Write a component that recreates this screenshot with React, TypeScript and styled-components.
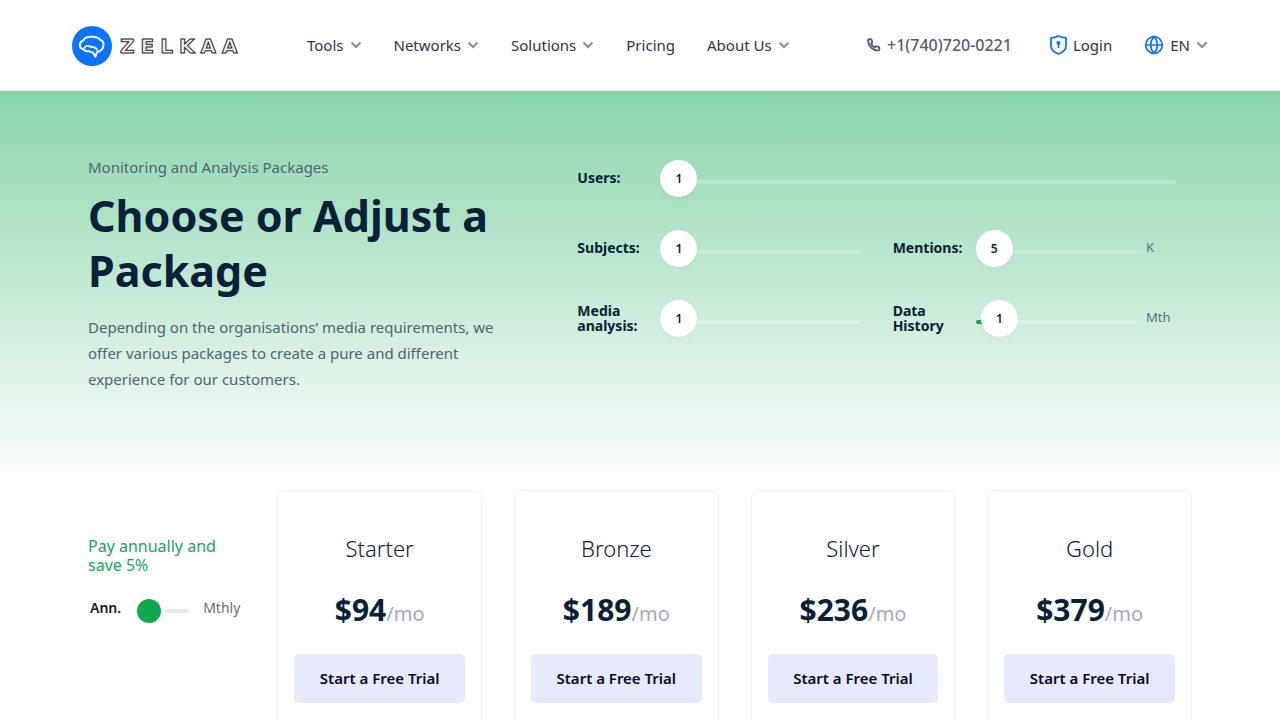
import React, { useState } from "react";
import styled, { createGlobalStyle } from "styled-components";
import { Globe } from "lucide-react";

const GlobalStyle = createGlobalStyle`
  *, *::before, *::after { box-sizing: border-box; }
  body {
    margin: 0;
    background: #fff;
    color: #082138;
    font-family: "Noto Sans", "Open Sans", sans-serif;
    font-size: 15px;
  }
  h1, h2, p { margin: 0; }
`;

const Header = styled.header`
  display: flex;
  align-items: center;
  height: 91px;
  padding: 0 72px;
  border-bottom: 1px solid #e9edf0;
  white-space: nowrap;
`;

const Brand = styled.a`
  display: flex;
  align-items: center;
  gap: 8px;
  width: 235px;
  padding-top: 2px;
  text-decoration: none;
`;

const Wordmark = styled.span`
  font-family: "DejaVu Sans", sans-serif;
  font-size: 20px;
  font-weight: 700;
  line-height: 24px;
  letter-spacing: 6px;
  color: #f0f1f1;
  -webkit-text-stroke: 1px #1f2224;
`;

const Nav = styled.nav`
  display: flex;
  flex: 1;
  gap: 32px;
`;

const NavLink = styled.a`
  display: flex;
  align-items: center;
  gap: 6px;
  color: #2b3352;
  font-size: 15px;
  line-height: 24px;
  text-decoration: none;

  svg { flex: none; }
`;

const Tools = styled.div`
  display: flex;
  gap: 32px;
`;

const PhoneLink = styled(NavLink)`
  color: #555c78;
  font-size: 16px;
  font-weight: 500;
  margin-right: 6px;
`;

const Hero = styled.section`
  height: 397px;
  padding-top: 64px;
  background: linear-gradient(180deg, #8ad5ab 0%, #fff 100%);
`;

const Container = styled.div`
  display: grid;
  grid-template-columns: ${(p: { $cols: string }) => p.$cols};
  max-width: 1136px;
  margin: 0 auto;
`;

const Intro = styled.div`
  padding: 0 32px 0 16px;
  color: #516374;
`;

const Eyebrow = styled.p`
  font-size: 15px;
  line-height: 24px;
`;

const Title = styled.h1`
  margin: 9px 0 16px;
  color: #082138;
  font-size: 43px;
  font-weight: 700;
  line-height: 55px;
`;

const Lead = styled.p`
  font-size: 15px;
  line-height: 26px;
`;

const Controls = styled.div`
  display: grid;
  grid-template-columns: 1fr 1fr;
  grid-auto-rows: 38px;
  gap: 32px;
  padding: 4px 32px 0;
`;

const Control = styled.div`
  display: flex;
  align-items: center;
  grid-column: ${(p: { $wide?: boolean }) => (p.$wide ? "1 / -1" : "auto")};
`;

const ControlLabel = styled.label`
  flex: none;
  width: 83px;
  min-height: 17px;
  padding-right: 12px;
  font-size: 14px;
  font-weight: 700;
  line-height: 15px;
`;

const Unit = styled.span`
  flex: none;
  width: 38px;
  padding: 0 0 2px 8px;
  color: #5d7080;
  font-size: 13px;
  line-height: 20px;
`;

const SliderBox = styled.div`
  position: relative;
  flex: 1;
  height: 37px;
`;

const Range = styled.input`
  appearance: none;
  display: block;
  width: 100%;
  height: 44px;
  margin: 0;
  background: none;

  &::-webkit-slider-runnable-track {
    height: 4px;
    border-radius: 2px;
    background: linear-gradient(#0fa850, #0fa850) no-repeat 0 0 / var(--fill) 100%, rgba(255, 255, 255, 0.25);
  }

  &::-webkit-slider-thumb {
    appearance: none;
    width: 37px;
    height: 37px;
    margin-top: -20px;
    border-radius: 50%;
    background: #fff;
    box-shadow: 0 2px 6px rgba(8, 33, 56, 0.03);
  }
`;

const Bubble = styled.output`
  position: absolute;
  top: 0;
  width: 37px;
  font-size: 12px;
  font-weight: 600;
  line-height: 37px;
  text-align: center;
  pointer-events: none;
`;

const Billing = styled.div`
  padding: 49px 16px 0;
`;

const Saving = styled.p`
  color: #12a955;
  font-size: 16px;
  line-height: 19px;
`;

const Period = styled.div`
  display: flex;
  align-items: center;
  margin-top: 17px;
  padding-left: 2px;
  font-size: 14px;
  line-height: 20px;
`;

const PeriodName = styled.span`
  flex: none;
  padding-bottom: 6px;
  color: ${(p: { $active?: boolean }) => (p.$active ? "#082138" : "#5d7080")};
  font-weight: ${(p: { $active?: boolean }) => (p.$active ? 600 : 400)};
`;

const PeriodRange = styled.input`
  appearance: none;
  width: 56px;
  height: 38px;
  margin: 0 14px 0 12px;
  background: none;

  &::-webkit-slider-runnable-track {
    height: 4px;
    border-radius: 2px;
    background: #e7eafc;
  }

  &::-webkit-slider-thumb {
    appearance: none;
    width: 32px;
    height: 32px;
    margin-top: -14px;
    border: 4px solid #fff;
    border-radius: 50%;
    background: #0fa850;
  }
`;

const Plans = styled.div`
  display: grid;
  grid-template-columns: repeat(4, 1fr);
  gap: 32px;
  padding: 2px 16px 0;
`;

const Plan = styled.article`
  min-height: 260px;
  padding: 41px 16px 16px;
  border: 1px solid #f2f3f5;
  border-radius: 8px;
  text-align: center;
`;

const PlanName = styled.h2`
  font-size: 22px;
  font-weight: 300;
  line-height: 32px;
`;

const Price = styled.p`
  margin: 26px 0 20px;
  font-size: 30px;
  font-weight: 700;
  line-height: 40px;
`;

const PerMonth = styled.span`
  color: #a6a6c8;
  font-size: 20px;
  font-weight: 400;
`;

const TrialButton = styled.button`
  width: 100%;
  height: 49px;
  padding: 0 0 2px;
  border: 0;
  border-radius: 5px;
  background: #e7eafb;
  color: #0b0b28;
  font: 600 15px/24px "Noto Sans", sans-serif;
  cursor: pointer;
`;

const BrainLogo = () => (
  <svg width="40" height="40" viewBox="0 0 40 40" fill="none" aria-hidden="true">
    <circle cx="20" cy="20" r="20" fill="#0b73ff" />
    <path
      d="M12.200 24C9.500 23.200 7.700 21 7.900 18.700c.2-2 1.400-3.600 3.300-4.200 1.300-2.500 4.600-3.900 8.300-3.700 3.800-.2 7.200 1 8.700 3.100 2.200.9 3.500 2.700 3.300 4.900-.2 3.600-2.600 6.600-6.500 7.200l-1.600 4.600-2.700-4.300c-1.300.1-2.400-.3-3.300-1.200-2.100.500-4.200.1-5.200-1.100z"
      stroke="#fff"
      strokeWidth="2"
      strokeLinejoin="round"
    />
    <path
      d="M12.200 22.500c.4-2.500 3.200-3.400 5.500-2.100 2.300 1.300 6.300-.2 7.300 3.300"
      stroke="#fff"
      strokeWidth="1.800"
      strokeLinecap="round"
    />
  </svg>
);

const PhoneIcon = () => (
  <svg width="14" height="14" viewBox="0 0 14 14" fill="none" aria-hidden="true">
    <path
      d="M2.100 1.300h1.500c.5 0 .8.3 1 .8l.6 1.700c.1.500 0 .9-.4 1.200l-.7.600c.8 1.700 2 2.900 3.800 3.700l.6-.7c.3-.4.800-.5 1.200-.3l1.800.6c.5.2.8.5.8 1v1.600c0 .7-.5 1.100-1.200 1.100C5.700 12.400 1.300 8 1 2.500c0-.7.4-1.200 1.100-1.200z"
      stroke="#555c78"
      strokeWidth="1.900"
      strokeLinejoin="round"
    />
  </svg>
);

const ShieldIcon = () => (
  <svg width="17" height="20" viewBox="0 0 17 20" fill="none" aria-hidden="true">
    <path
      d="M8.500 1C6.300 2.300 3.800 2.900 1 2.900V11c0 4 3.500 6.500 7.500 8 4-1.500 7.500-4 7.500-8V2.900C13.200 2.900 10.700 2.300 8.500 1z"
      stroke="#0b73ff"
      strokeWidth="1.800"
      strokeLinejoin="round"
    />
    <circle cx="8.500" cy="8" r="2" fill="#0b73ff" />
    <path d="M8.500 8v5" stroke="#0b73ff" strokeWidth="1.600" />
  </svg>
);

const Chevron = () => (
  <svg width="12" height="8" viewBox="0 0 12 8" fill="none" aria-hidden="true">
    <path d="M1.500 1.500L6 6l4.500-4.500" stroke="#7b93a3" strokeWidth="2" />
  </svg>
);

const links = [
  { name: "Tools", menu: true },
  { name: "Networks", menu: true },
  { name: "Solutions", menu: true },
  { name: "Pricing", menu: false },
  { name: "About Us", menu: true },
];

const plans = [
  { name: "Starter", price: 94 },
  { name: "Bronze", price: 189 },
  { name: "Silver", price: 236 },
  { name: "Gold", price: 379 },
];

interface SliderProps {
  id: string;
  label: string;
  min: number;
  max: number;
  initial: number;
  unit?: string;
  wide?: boolean;
}

function Slider({ id, label, min, max, initial, unit, wide }: SliderProps) {
  const [value, setValue] = useState(initial);
  const ratio = (value - min) / (max - min);
  const offset = `calc((100% - 37px) * ${ratio})`;
  return (
    <Control $wide={wide}>
      <ControlLabel htmlFor={id}>{label}</ControlLabel>
      <SliderBox>
        <Range
          id={id}
          type="range"
          min={min}
          max={max}
          value={value}
          onChange={(e) => setValue(Number(e.target.value))}
          style={{ "--fill": ratio ? `calc(${offset} + 18px)` : "0px" } as React.CSSProperties}
        />
        <Bubble htmlFor={id} style={{ left: offset }}>{value}</Bubble>
      </SliderBox>
      {unit && <Unit>{unit}</Unit>}
    </Control>
  );
}

export default function App() {
  const [period, setPeriod] = useState(0);
  return (
    <>
      <GlobalStyle />
      <Header>
        <Brand href="#">
          <BrainLogo />
          <Wordmark>ZELKAA</Wordmark>
        </Brand>
        <Nav>
          {links.map((link) => (
            <NavLink href="#" key={link.name}>
              {link.name}
              {link.menu && <Chevron />}
            </NavLink>
          ))}
        </Nav>
        <Tools>
          <PhoneLink href="tel:+17407200221">
            <PhoneIcon />
            +1(740)720-0221
          </PhoneLink>
          <NavLink href="#">
            <ShieldIcon />
            Login
          </NavLink>
          <NavLink href="#">
            <Globe size={20} color="#0b73ff" aria-hidden="true" />
            EN
            <Chevron />
          </NavLink>
        </Tools>
      </Header>
      <main>
        <Hero>
          <Container $cols="5fr 7fr">
            <Intro>
              <Eyebrow>Monitoring and Analysis Packages</Eyebrow>
              <Title>Choose or Adjust a Package</Title>
              <Lead>
                Depending on the organisations’ media requirements, we offer various packages to create a pure and
                different experience for our customers.
              </Lead>
            </Intro>
            <Controls>
              <Slider id="users" label="Users:" min={1} max={50} initial={1} wide />
              <Slider id="subjects" label="Subjects:" min={1} max={50} initial={1} />
              <Slider id="mentions" label="Mentions:" min={5} max={500} initial={5} unit="K" />
              <Slider id="media" label="Media analysis:" min={1} max={50} initial={1} />
              <Slider id="history" label="Data History" min={0} max={24} initial={1} unit="Mth" />
            </Controls>
          </Container>
        </Hero>
        <Container $cols="2fr 10fr">
          <Billing>
            <Saving>Pay annually and save 5%</Saving>
            <Period>
              <PeriodName $active={period === 0}>Ann.</PeriodName>
              <PeriodRange
                type="range"
                aria-label="Billing period"
                min={0}
                max={1}
                value={period}
                onChange={(e) => setPeriod(Number(e.target.value))}
              />
              <PeriodName $active={period === 1}>Mthly</PeriodName>
            </Period>
          </Billing>
          <Plans>
            {plans.map((plan) => (
              <Plan key={plan.name}>
                <PlanName>{plan.name}</PlanName>
                <Price>
                  ${plan.price}
                  <PerMonth>/mo</PerMonth>
                </Price>
                <TrialButton type="button">Start a Free Trial</TrialButton>
              </Plan>
            ))}
          </Plans>
        </Container>
      </main>
    </>
  );
}
